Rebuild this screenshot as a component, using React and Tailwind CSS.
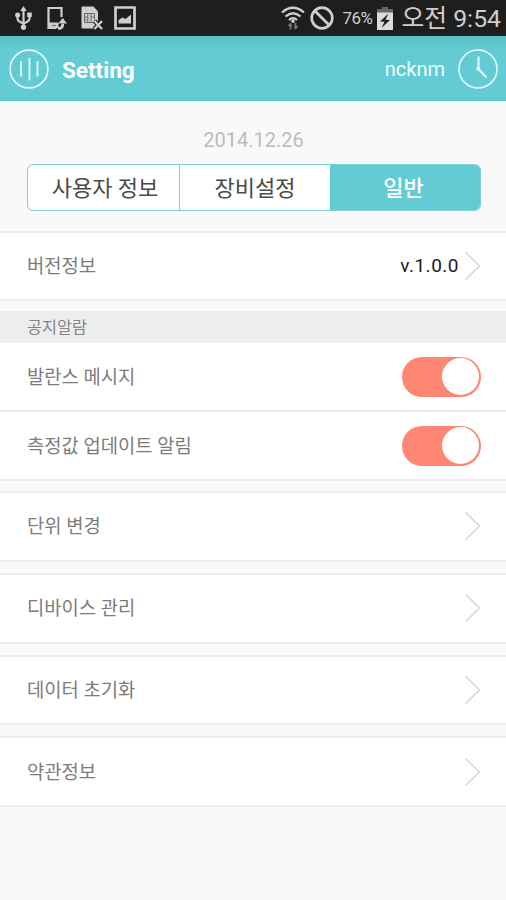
import { useState } from 'react'

const UsbIcon = () => (
  <svg className="w-[17px] h-6" viewBox="0 0 17 24" fill="none" stroke="#cfcfcf" strokeWidth="2.2">
    <path d="M8.500 3v18M2.500 9v3.500q0 3 6 5M14.500 9v3.500q0 3-6 5" />
    <path d="M8.500 0l3.200 5H5.300z" fill="#cfcfcf" stroke="none" />
    <circle cx="8.500" cy="21.200" r="2.700" fill="#cfcfcf" stroke="none" />
    <circle cx="2.600" cy="9" r="2.500" fill="#cfcfcf" stroke="none" />
    <path d="M12.200 6.500h4.600v4.600h-4.600z" fill="#cfcfcf" stroke="none" />
  </svg>
)

const PhoneShareIcon = () => (
  <svg className="w-5 h-6" viewBox="0 0 20 24" fill="none">
    <path d="M14.500 11V2H1.500v20h8" stroke="#cfcfcf" strokeWidth="2.200" />
    <path d="M1 16.500h10.500v5.500H1z" fill="#cfcfcf" />
    <path d="M5 19.500h4" stroke="#777" strokeWidth="1.200" />
    <path d="M11 22.300h2q2.800-.5 2.800-4.500" stroke="#cfcfcf" strokeWidth="2.800" />
    <path d="M11.300 17.500l4.400-5.500 4.300 5.500z" fill="#cfcfcf" />
  </svg>
)

const SimOffIcon = () => (
  <svg className="w-[22px] h-6" viewBox="0 0 22 24" fill="none">
    <path d="M1.500 .5h11l4.500 5v17H1.500q-1 0-1-1v-20q0-1 1-1z" fill="#cfcfcf" />
    <path d="M3.500 7.500h10v9h-10zM3.500 11h3M10 11h3.500M3.500 14h3M6.800 7.500v9M10 7.500v9" stroke="#6a6a6a" strokeWidth="1" />
    <path d="M13.500 15l7.500 8M21 15l-7.500 8" stroke="#1e1e1e" strokeWidth="4.500" />
    <path d="M13.500 15l7.500 8M21 15l-7.500 8" stroke="#cfcfcf" strokeWidth="2.200" />
  </svg>
)

const PictureIcon = () => (
  <svg className="w-[22px] h-6" viewBox="0 0 22 24" fill="none">
    <path d="M1.500 1.500h19v21h-19z" stroke="#cfcfcf" strokeWidth="2.700" />
    <path d="M4.500 17.500v-3.500l4-2.500 3 1.500 5.500-4.500v9z" fill="#cfcfcf" />
  </svg>
)

const WifiIcon = () => (
  <svg className="w-6 h-6" viewBox="0 0 24 24" fill="none">
    <path d="M1 6.500q11-9.500 22 0M4.500 10.500q7.500-6.500 15 0M8 14q4-3.500 8 0" stroke="#cfcfcf" strokeWidth="2.300" />
    <circle cx="12" cy="15.300" r="1.700" fill="#cfcfcf" />
    <path d="M9.500 23.500v-5.500M14.500 17v5.500" stroke="#777" strokeWidth="2" />
    <path d="M6.500 20l3-3.500 2 3.500zM12.500 20.300h5l-3 3.500z" fill="#777" />
  </svg>
)

const BlockedIcon = () => (
  <svg className="w-6 h-6" viewBox="0 0 24 24" fill="none" stroke="#cfcfcf" strokeWidth="2.700">
    <circle cx="12" cy="12" r="10.300" />
    <path d="M4.700 4.700l14.600 14.600" />
  </svg>
)

const BatteryIcon = () => (
  <svg className="w-4 h-[23px]" viewBox="0 0 16 23">
    <path d="M5 0h6v2h5v4H0V2h5z" fill="#666" />
    <path d="M0 5.500h16V23H0z" fill="#dcdcdc" />
    <path d="M11.500 6.500L3 14.500l4.500 .3L4.500 21l8.500-8-4.500-.3z" fill="#1e1e1e" />
  </svg>
)

const MenuIcon = () => (
  <svg className="w-10 h-10" viewBox="0 0 40 40" fill="none" stroke="#e8fafb">
    <circle cx="20" cy="20" r="18.900" strokeWidth="1.600" />
    <path d="M12 12v15.500M20.500 9v22.500M28.500 12v15.500" strokeWidth="1.800" />
  </svg>
)

const ClockIcon = () => (
  <svg className="w-10 h-10" viewBox="0 0 40 40" fill="none" stroke="#e8fafb">
    <circle cx="20" cy="20" r="19" strokeWidth="1.600" />
    <path d="M20.500 7.500v12.500l8 8.500" strokeWidth="2" />
    <circle cx="20.300" cy="19.800" r="2" fill="#e8fafb" stroke="none" />
  </svg>
)

const Chevron = () => (
  <svg className="w-4 h-7" viewBox="0 0 16 28" fill="none" stroke="#d3d3d3" strokeWidth="1.300">
    <path d="M1.500 .5l14 13.500-14 13.500" />
  </svg>
)

const Toggle = () => {
  const [on, setOn] = useState(true)

  return (
    <button
      type="button"
      role="switch"
      aria-checked={on}
      onClick={() => setOn(!on)}
      className={`flex items-center w-[79px] h-10 -mr-px rounded-full px-[2px] ${on ? 'justify-end bg-[#ff8672]' : 'justify-start bg-[#d5d5d5]'}`}
    >
      <span className="w-[37px] h-[37px] rounded-full bg-white" />
    </button>
  )
}

const Row = ({ label, children }) => (
  <div className="flex items-center justify-between h-full pl-[27px] pr-[26px] bg-white">
    <span className="pt-[2px] text-[18.800px] leading-7 text-[#7c7c7c]">{label}</span>
    <div className="flex items-center">{children}</div>
  </div>
)

const LINKS = ['단위 변경', '디바이스 관리', '데이터 초기화', '약관정보']

const App = () => {
  return (
    <div className="w-[506px] h-[900px] overflow-hidden bg-[#f9f9f9] font-['Roboto','Noto_Sans_CJK_KR',sans-serif]">
      <div className="flex items-center justify-between h-9 pl-[15px] pr-[5px] bg-[#1e1e1e] text-[#cfcfcf]">
        <div className="flex items-center">
          <UsbIcon />
          <span className="ml-[15px] flex"><PhoneShareIcon /></span>
          <span className="ml-[14px] flex"><SimOffIcon /></span>
          <span className="ml-[11px] flex"><PictureIcon /></span>
        </div>
        <div className="flex items-center">
          <WifiIcon />
          <span className="ml-[5px] flex"><BlockedIcon /></span>
          <span className="ml-2 w-[35px] text-[17px] leading-6 tracking-[-0.5px] whitespace-nowrap">76%</span>
          <BatteryIcon />
          <span className="ml-2 pt-[2px] text-[24.800px] leading-8 whitespace-nowrap">오전 9:54</span>
        </div>
      </div>

      <header className="flex items-center justify-between h-[65px] pl-[9px] pr-2 bg-linear-to-b from-[#5cbfc6] to-[#62cbd4] to-20% text-white">
        <div className="flex items-center gap-[13px]">
          <MenuIcon />
          <h1 className="pt-[2px] text-[22.500px] leading-8 font-bold">Setting</h1>
        </div>
        <div className="flex items-center gap-[13px]">
          <span className="pt-px text-[20px] leading-7 text-[#effcfc]">ncknm</span>
          <ClockIcon />
        </div>
      </header>

      <div className="h-[130px] pt-6 px-[27px]">
        <p className="h-[39px] pl-px text-center text-[20px] leading-[30px] text-[#bcbcbc]">2014.12.26</p>
        <div className="flex h-[47px] w-[454px] rounded-md border border-[#7fd0d8] bg-white overflow-hidden text-[22px] text-[#4a4a4a]">
          <button type="button" className="w-[152px] pl-[3px] pt-px border-r border-[#7fd0d8]">사용자 정보</button>
          <button type="button" className="w-[150px] pt-px">장비설정</button>
          <button type="button" className="flex-1 bg-[#62cbd4] pt-px pr-[3px] font-medium text-white">일반</button>
        </div>
      </div>

      <main>
        <div className="h-[70px] border-y-2 border-[#ededed]">
          <Row label="버전정보">
            <span className="mr-[5px] text-[19px] leading-7 tracking-[0.500px] text-[#1c1c1c]">v.1.0.0</span>
            <Chevron />
          </Row>
        </div>

        <section className="mt-[10px]">
          <h2 className="h-8 pt-px pl-[27px] bg-[#ededed] text-[16.300px] leading-8 text-[#858585]">공지알람</h2>
          <div className="h-[69px] border-b-2 border-[#e9e9e9]">
            <Row label="발란스 메시지"><Toggle /></Row>
          </div>
          <div className="h-[69px] border-b-2 border-[#ededed]">
            <Row label="측정값 업데이트 알림"><Toggle /></Row>
          </div>
        </section>

        <div className="mt-[10px] flex flex-col gap-[11px]">
          {LINKS.map((label) => (
            <div key={label} className="h-[70.800px] border-y-2 border-[#ededed]">
              <Row label={label}><Chevron /></Row>
            </div>
          ))}
        </div>
      </main>
    </div>
  )
}

export default App
